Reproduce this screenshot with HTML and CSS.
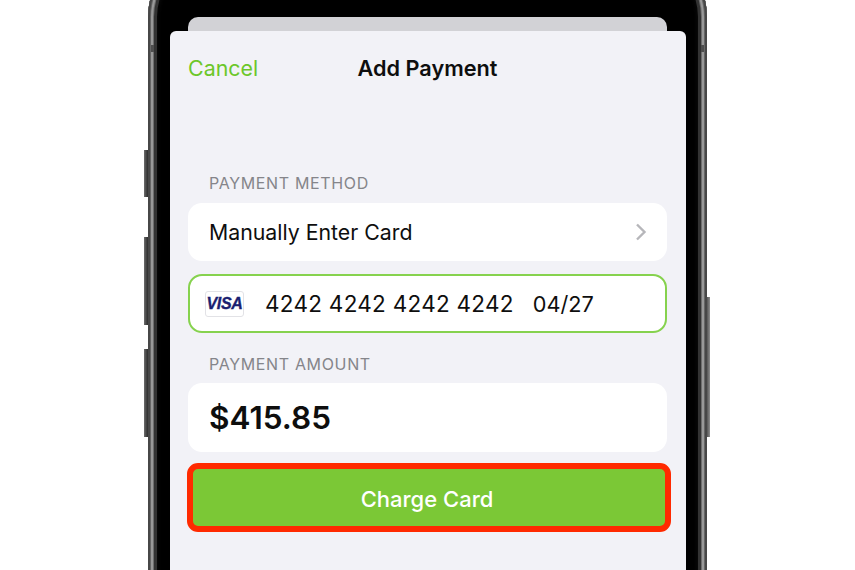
FILE: index.html
```html
<!DOCTYPE html>
<html lang="en">
<head>
<meta charset="utf-8">
<title>Add Payment</title>
<link rel="stylesheet" href="styles.css">
</head>
<body>
<div class="stage">
  <div class="phone">
    <span class="side-btn btn-a"></span>
    <span class="side-btn btn-b"></span>
    <span class="side-btn btn-c"></span>
    <span class="side-btn btn-d"></span>
    <span class="antenna antenna-l"></span>
    <span class="antenna antenna-r"></span>
    <div class="rim">
      <div class="back-sheet"></div>
      <div class="sheet">
        <header class="nav">
          <span class="cancel">Cancel</span>
          <span class="title">Add Payment</span>
        </header>
        <div class="form">
          <div class="label label-method">PAYMENT METHOD</div>
          <div class="row row-method">
            <span>Manually Enter Card</span>
            <svg class="chevron" width="12" height="18" viewBox="0 0 12 18"><path d="M2 1.500 9.500 9 2 16.500" fill="none" stroke="#b6b6ba" stroke-width="2.400"/></svg>
          </div>
          <div class="row row-card">
            <span class="visa"><span class="visa-text">VISA</span></span>
            <span class="card-number">4242 4242 4242 4242</span>
            <span class="card-exp">04/27</span>
          </div>
          <div class="label label-amount">PAYMENT AMOUNT</div>
          <div class="row row-amount">$415.85</div>
          <div class="charge">Charge Card</div>
        </div>
      </div>
    </div>
  </div>
</div>
</body>
</html>
```
FILE: styles.css
```css
* { box-sizing: border-box; }
html, body { margin: 0; height: 570px; overflow: hidden; background: #fff; }
body { font-family: Inter, "Liberation Sans", sans-serif; color: #0e0e0e; }

.stage { height: 570px; overflow: hidden; padding-left: 148px; }
.phone {
  position: relative;
  width: 559px;
  height: 680px;
  margin-top: -53px;
}
.side-btn { position: absolute; width: 4px; background: linear-gradient(90deg, #6e6e6e, #4a4a4a 50%, #2e2e2e); }
.btn-a { left: -4px; top: 203px; height: 47px; }
.btn-b { left: -4px; top: 290px; height: 88px; }
.btn-c { left: -4px; top: 402px; height: 88px; }
.btn-d { right: -3px; width: 3px; top: 350px; height: 140px; background: linear-gradient(90deg, #555, #8e8e8e); }

.antenna { position: absolute; top: 98px; width: 3px; height: 7px; background: #4e4e4e; }
.antenna-l { left: 3px; }
.antenna-r { right: 3px; }

.rim {
  height: 100%;
  padding: 70px 21px 0 22px;
  border-radius: 70px 70px 0 0;
  background: #000;
  box-shadow:
    inset 0 0 0 2px #474747,
    inset 0 0 0 3px #666,
    inset 0 0 0 5px #999,
    inset 0 0 0 6px #6e6e6e,
    inset 0 0 0 9px #333,
    inset 0 0 4px 10px #0c0c0c;
  display: flex;
  flex-direction: column;
}
.back-sheet {
  width: 479px;
  height: 14px;
  flex: none;
  margin-left: 18px;
  background: #d2d2d6;
  border-radius: 10px 10px 0 0;
}
.sheet {
  width: 516px;
  flex: 1;
  background: #f2f2f7;
  border-radius: 6px 6px 0 0;
  padding: 0 19px 0 18px;
}
.nav { position: relative; height: 74px; display: flex; align-items: center; justify-content: center; }
.cancel { position: absolute; left: 0; top: 23px; font-size: 21.400px; line-height: 28px; color: #6cc72a; }
.title { font-size: 21.700px; line-height: 28px; font-weight: 600; margin-top: -1px; }

.form { display: flex; flex-direction: column; }
.label { font-size: 16px; line-height: 20px; color: #85858a; padding-left: 21px; letter-spacing: .65px; }
.label-method { margin-top: 68px; }
.label-amount { margin-top: 21px; }
.row { background: #fff; border-radius: 14px; display: flex; align-items: center; padding: 0 21px; font-size: 21.300px; }
.row-method { height: 58px; margin-top: 10px; justify-content: space-between; }
.chevron { margin-right: -1px; }
.row-card { height: 59px; margin-top: 13px; border: 2px solid #86d24e; padding: 0 15px; font-size: 22.500px; letter-spacing: .27px; }
.visa { width: 39px; height: 26px; flex: none; border: 1.500px solid #e2e2e6; border-radius: 3px; display: flex; align-items: center; justify-content: center; background: #fff; }
.visa-text { font-family: "Liberation Sans", sans-serif; font-size: 16px; font-weight: 700; font-style: italic; color: #1a1f71; letter-spacing: -.3px; -webkit-text-stroke: .35px #1a1f71; }
.card-number { margin-left: 21px; }
.card-exp { margin-left: 19px; font-size: 21.700px; letter-spacing: 0; }
.row-amount { height: 69px; margin-top: 9px; font-size: 31.500px; font-weight: 600; }
.charge {
  height: 69px;
  margin: 11px -4px 0 -1px;
  padding: 2px 4px 0 0;
  background: #7bc836;
  border: 6px solid #ff2a00;
  border-radius: 11px;
  display: flex;
  align-items: center;
  justify-content: center;
  font-size: 22px;
  font-weight: 500;
  color: #fff;
}
```
